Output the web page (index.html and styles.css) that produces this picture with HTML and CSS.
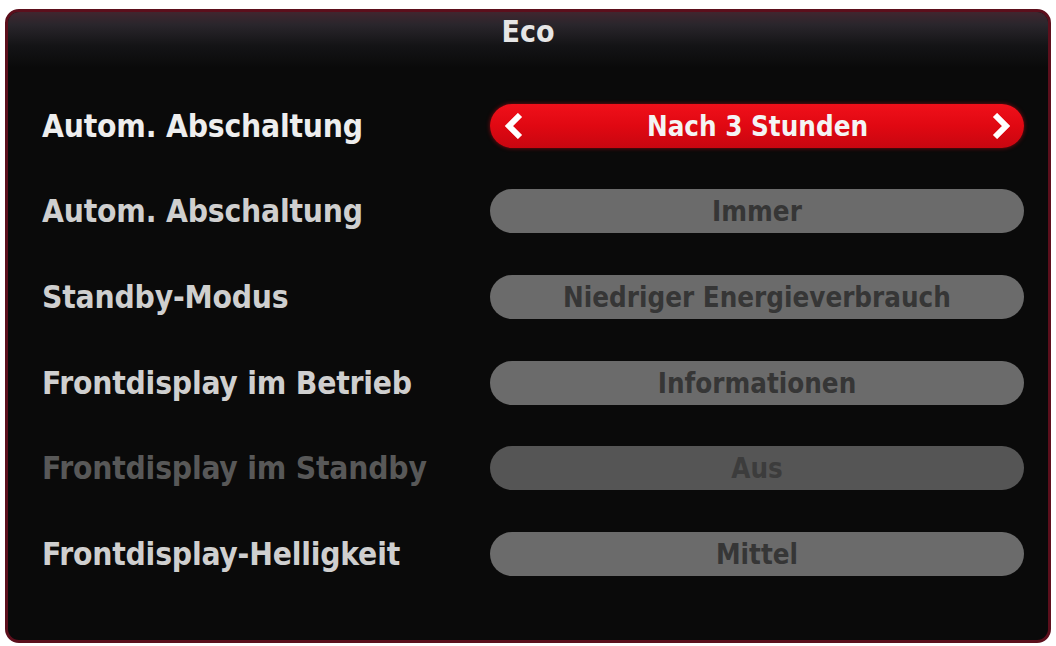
FILE: index.html
```html
<!DOCTYPE html>
<html lang="de">
<head>
<meta charset="utf-8">
<title>Eco</title>
<link rel="stylesheet" href="styles.css">
</head>
<body>
<div class="panel">
  <div class="title">Eco</div>
  <div class="rows">
    <div class="row">
      <div class="label label-active">Autom. Abschaltung</div>
      <div class="pill pill-active">
        <svg class="chev" viewBox="0 0 22 26" aria-hidden="true"><path d="M17 2 L6 13 L17 24" fill="none" stroke="#fff" stroke-width="6" stroke-linejoin="miter" stroke-linecap="butt"/></svg>
        <span class="value">Nach 3 Stunden</span>
        <svg class="chev" viewBox="0 0 22 26" aria-hidden="true"><path d="M5 2 L16 13 L5 24" fill="none" stroke="#fff" stroke-width="6" stroke-linejoin="miter" stroke-linecap="butt"/></svg>
      </div>
    </div>
    <div class="row">
      <div class="label">Autom. Abschaltung</div>
      <div class="pill"><span class="value">Immer</span></div>
    </div>
    <div class="row">
      <div class="label">Standby-Modus</div>
      <div class="pill"><span class="value">Niedriger Energieverbrauch</span></div>
    </div>
    <div class="row">
      <div class="label">Frontdisplay im Betrieb</div>
      <div class="pill"><span class="value">Informationen</span></div>
    </div>
    <div class="row row-disabled">
      <div class="label">Frontdisplay im Standby</div>
      <div class="pill"><span class="value">Aus</span></div>
    </div>
    <div class="row">
      <div class="label">Frontdisplay-Helligkeit</div>
      <div class="pill"><span class="value">Mittel</span></div>
    </div>
  </div>
</div>
</body>
</html>
```

FILE: styles.css
```css
html, body {
  margin: 0;
  padding: 0;
  background: #ffffff;
}

body {
  font-family: "DejaVu Sans Condensed", "DejaVu Sans", sans-serif;
  font-weight: bold;
}

.panel {
  box-sizing: border-box;
  margin: 9px 5px 0 5px;
  width: 1046px;
  height: 634px;
  border: 3px solid #5c0f1c;
  border-radius: 14px;
  background: #0a0a0a;
  overflow: hidden;
  display: flex;
  flex-direction: column;
}

.title {
  height: 56px;
  flex: none;
  box-sizing: border-box;
  padding-top: 1px;
  text-align: center;
  color: #e6e6e6;
  font-size: 30px;
  line-height: 38px;
  background: linear-gradient(to bottom, #40262f 0%, #2a262c 22%, #141416 60%, #0a0a0a 100%);
}

.rows {
  display: flex;
  flex-direction: column;
  padding: 15px 24px 0 34px;
}

.row {
  height: 85.6px;
  display: flex;
  align-items: center;
}

.label {
  width: 448px;
  flex: none;
  color: #cfcfcf;
  font-size: 31.5px;
  letter-spacing: -0.2px;
}

.label-active {
  color: #eeeeee;
}

.pill {
  flex: 1;
  height: 44px;
  border-radius: 22px;
  background: #6b6b6b;
  display: flex;
  align-items: center;
  justify-content: center;
  position: relative;
}

.value {
  color: #363636;
  font-size: 27.5px;
  line-height: 44px;
}

.pill-active {
  background: linear-gradient(to bottom, #f0101a 0%, #e00812 50%, #c80610 100%);
  justify-content: space-between;
  padding: 0 12px 0 13px;
  box-shadow: 0 0 4px rgba(220, 10, 20, 0.6);
}

.pill-active .value {
  color: #f4f4f4;
}

.chev {
  width: 22px;
  height: 26px;
  flex: none;
}

.row-disabled .label {
  color: #585858;
}

.row-disabled .pill {
  background: #555555;
}

.row-disabled .value {
  color: #3c3c3c;
}
```
